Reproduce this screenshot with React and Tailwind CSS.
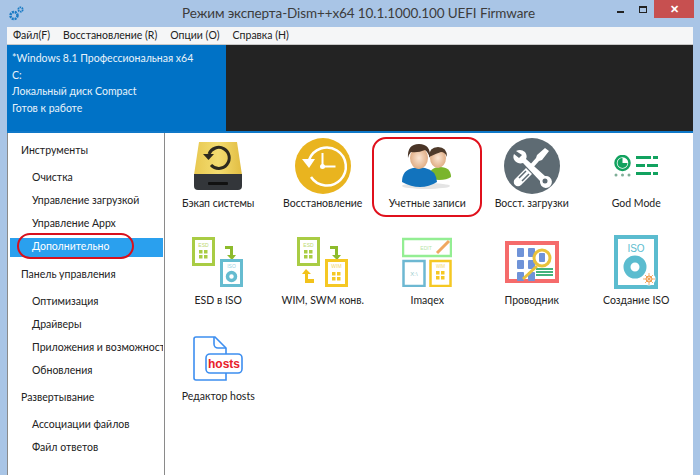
const FONT = "font-['Lato','Roboto',sans-serif]";

const SIDEBAR = [
  { label: "Инструменты", heading: true },
  { label: "Очистка" },
  { label: "Управление загрузкой" },
  { label: "Управление Appx" },
  { label: "Дополнительно", active: true },
  { label: "Панель управления", heading: true },
  { label: "Оптимизация" },
  { label: "Драйверы" },
  { label: "Приложения и возможности" },
  { label: "Обновления" },
  { label: "Развертывание", heading: true },
  { label: "Ассоциации файлов" },
  { label: "Файл ответов" },
];

function BackupIcon() {
  return (
    <svg width="52" height="52" viewBox="0 0 52 52">
      <defs>
        <linearGradient id="dr" x1="0" x2="1" y1="0" y2="0">
          <stop offset="0" stopColor="#e8c850" />
          <stop offset="0.5" stopColor="#f3dc70" />
          <stop offset="1" stopColor="#e2bd42" />
        </linearGradient>
      </defs>
      <path d="M7 2h38l5 33H2z" fill="url(#dr)" />
      <path d="M2 34h48v12q0 4-4 4H6q-4 0-4-4z" fill="#33363a" />
      <rect x="16" y="42" width="20" height="3" rx="1" fill="#111" />
      <path d="M17 14a10.500 10.500 0 1 1 2 11" fill="none" stroke="#2d2a1e" strokeWidth="3" />
      <path d="M11 14h11l-5.500 6z" fill="#2d2a1e" />
    </svg>
  );
}

function RestoreIcon() {
  return (
    <svg width="56" height="56" viewBox="0 0 56 56">
      <circle cx="28" cy="28" r="28" fill="#e9b41f" />
      <path d="M14 22a19 19 0 1 1 2 17" fill="none" stroke="#fff" strokeWidth="2.500" />
      <path d="M7 21h13l-6 9z" fill="#fff" />
      <path d="M27.500 15v13.500h13" fill="none" stroke="#fff" strokeWidth="2" />
      <circle cx="27.500" cy="28.500" r="2.500" fill="#fff" />
    </svg>
  );
}

function UsersIcon() {
  return (
    <svg width="50" height="46" viewBox="0 0 50 46">
      <defs>
        <radialGradient id="face">
          <stop offset="0" stopColor="#fbe6d4" />
          <stop offset="1" stopColor="#e0ae86" />
        </radialGradient>
      </defs>
      <ellipse cx="24" cy="43" rx="24" ry="3" fill="#e4e4e4" />
      <path d="M26 36q1-12 12-12t11 10q-4 3-12 3z" fill="#7ab52c" />
      <ellipse cx="36" cy="15" rx="8" ry="10" fill="url(#face)" />
      <path d="M27 14q0-10 9-10t9 10q-2-5-6-5-6 2-12 5z" fill="#4e3a2a" />
      <path d="M0 39q0-12 11-14l6-1 6 1q11 2 12 14-8 5-17 5T0 39z" fill="#1273bd" />
      <ellipse cx="17" cy="15" rx="9" ry="11" fill="url(#face)" />
      <path d="M6 15Q5 1 17 1t11 14q-2-6-5-8-7 3-14 2-2 2-3 6z" fill="#4a3527" />
    </svg>
  );
}

function BootIcon() {
  return (
    <svg width="56" height="56" viewBox="0 0 56 56">
      <circle cx="28" cy="28" r="28" fill="#5e6b73" />
      <path d="M41 10l4 3-7 9-3 1-8 9-3-3 8-9 1-3z" fill="#fff" />
      <path d="M12 13a8 8 0 0 1 9 1c2 3 2 5 1 7l19 17a6 6 0 1 1-5 5L19 25c-3 1-6 0-8-2s-2-5-1-7l5 4 3-3z" fill="#fff" />
      <path d="M22 30L11 41a4 4 0 0 0 6 6l11-11z" fill="#fff" />
      <path d="M15 40l7-7M18 43l7-7" stroke="#5e6b73" strokeWidth="1.500" />
      <circle cx="41" cy="43" r="2.500" fill="#5e6b73" />
    </svg>
  );
}

function GodModeIcon() {
  return (
    <svg width="44" height="22" viewBox="0 0 44 22">
      <circle cx="8.500" cy="8" r="7" fill="none" stroke="#12a25f" strokeWidth="2.500" />
      <path d="M8.500 8V3a5 5 0 1 0 5 5z" fill="#12a25f" />
      <circle cx="2" cy="20" r="1.500" fill="#7fae98" />
      <circle cx="8.500" cy="20" r="1.500" fill="#7fae98" />
      <circle cx="15" cy="20" r="1.500" fill="#7fae98" />
      <path d="M22 1h15v3H22zM39 1h5v3h-5zM22 9h9v3h-9zM33 9h11v3H33zM22 17h15v3H22zM39 17h5v3h-5z" fill="#12a25f" />
    </svg>
  );
}

function Tiles({ x, y, color }) {
  return (
    <path
      d={`M${x} ${y}h3.500v3.500h-3.500zM${x + 5} ${y}h3.500v3.500h-3.500zM${x} ${y + 5}h3.500v3.500h-3.500zM${x + 5} ${y + 5}h3.500v3.500h-3.500z`}
      fill={color}
    />
  );
}

function EsdIcon() {
  return (
    <svg width="52" height="50" viewBox="0 0 52 50">
      <rect x="1.500" y="1.500" width="20" height="26" fill="#fff" stroke="#a9cc44" strokeWidth="3" />
      <text x="11.500" y="10" fontSize="5" textAnchor="middle" fill="#bcd86f" fontFamily="Liberation Sans">ESD</text>
      <Tiles x={7} y={13} color="#a9cc44" />
      <path d="M33 9h8v9h3l-4 5-5-5h3v-6h-5z" fill="#8dbb2c" />
      <rect x="29.500" y="23.500" width="20" height="25" fill="#fff" stroke="#66bcd0" strokeWidth="3" />
      <text x="39.500" y="31" fontSize="5" textAnchor="middle" fill="#99d2df" fontFamily="Liberation Sans">ISO</text>
      <circle cx="39.500" cy="39.500" r="4" fill="none" stroke="#66bcd0" strokeWidth="3.500" />
    </svg>
  );
}

function WimIcon() {
  return (
    <svg width="52" height="50" viewBox="0 0 52 50">
      <rect x="1.500" y="1.500" width="20" height="26" fill="#fff" stroke="#a9cc44" strokeWidth="3" />
      <text x="11.500" y="10" fontSize="5" textAnchor="middle" fill="#bcd86f" fontFamily="Liberation Sans">ESD</text>
      <Tiles x={7} y={13} color="#a9cc44" />
      <path d="M33 9h8v9h3l-4 5-5-5h3v-6h-5z" fill="#8dbb2c" />
      <path d="M9 32l5 5h-3v5h6v4H8v-9H5z" fill="#f2c21b" />
      <rect x="29.500" y="23.500" width="20" height="25" fill="#fff" stroke="#f5c823" strokeWidth="3" />
      <text x="39.500" y="31" fontSize="5" textAnchor="middle" fill="#f3d667" fontFamily="Liberation Sans">WIM</text>
      <Tiles x={35} y={35} color="#f5c823" />
    </svg>
  );
}

function ImagexIcon() {
  return (
    <svg width="50" height="50" viewBox="0 0 50 50">
      <rect x="1" y="2" width="48" height="17" fill="#fff" stroke="#93ee93" strokeWidth="2.500" />
      <text x="24" y="13" fontSize="5" textAnchor="middle" fill="#b6e6a8" fontFamily="Liberation Sans">EDIT</text>
      <path d="M35 16L47 4" stroke="#f0a860" strokeWidth="3" />
      <rect x="1.500" y="24" width="21" height="25" fill="#fff" stroke="#6db8d2" strokeWidth="2.500" />
      <text x="12" y="39" fontSize="6" textAnchor="middle" fill="#9cc" fontFamily="Liberation Sans">X:\</text>
      <rect x="28.500" y="24" width="20" height="25" fill="#fff" stroke="#f5c823" strokeWidth="2.500" />
      <text x="38.500" y="31" fontSize="4.500" textAnchor="middle" fill="#f3d667" fontFamily="Liberation Sans">WIM</text>
      <Tiles x={34} y={34} color="#f5c823" />
    </svg>
  );
}

function ExplorerIcon() {
  const cells = [
    [12, 9], [23, 9], [12, 21], [23, 21], [12, 33], [23, 33],
  ];
  return (
    <svg width="54" height="42" viewBox="0 0 54 42">
      <rect x="2" y="2" width="50" height="38" fill="#fff" stroke="#f56b6b" strokeWidth="4" />
      {cells.map(([x, y]) => (
        <rect key={`${x}-${y}`} x={x} y={y - 2} width="7" height="9" rx="1" fill="#6f93d8" />
      ))}
      <path d="M31 28h17M31 31h17M31 34h17" stroke="#44b27c" strokeWidth="2" />
      <path d="M18 38l14-13" stroke="#e9c23a" strokeWidth="3" />
      <circle cx="37" cy="17" r="8" fill="#fff" stroke="#e9c23a" strokeWidth="3" />
      <rect x="34" y="12" width="6" height="9" rx="1" fill="#6f93d8" />
    </svg>
  );
}

function CreateIsoIcon() {
  return (
    <svg width="44" height="54" viewBox="0 0 44 54">
      <rect x="2" y="2" width="40" height="50" fill="#fff" stroke="#5bbccf" strokeWidth="4" />
      <text x="22" y="17" fontSize="10" textAnchor="middle" fill="#5bbccf" fontFamily="Liberation Sans">ISO</text>
      <circle cx="21" cy="32" r="8" fill="none" stroke="#5bbccf" strokeWidth="7" />
      <circle cx="35" cy="44" r="6.500" fill="#fff" />
      <circle cx="35" cy="44" r="3" fill="none" stroke="#ef9a4a" />
      <path d="M35 38v12M29 44h12M31 40l8 8M39 40l-8 8" stroke="#ef9a4a" strokeWidth="0.800" />
    </svg>
  );
}

function HostsIcon() {
  return (
    <svg width="50" height="46" viewBox="0 0 50 46">
      <path d="M3 1h19l11 11v32H3a2 2 0 0 1-2-2V3a2 2 0 0 1 2-2z" fill="#fff" stroke="#3d8ef0" strokeWidth="1.600" />
      <path d="M21 1v7a4 4 0 0 0 4 4h8" fill="none" stroke="#3d8ef0" strokeWidth="1.600" />
      <rect x="13" y="18" width="36" height="19" rx="4" fill="#fff" stroke="#3d8ef0" strokeWidth="1.600" />
      <text x="31" y="32" fontSize="12" fontWeight="700" textAnchor="middle" fill="#e8202a" fontFamily="Liberation Sans">hosts</text>
    </svg>
  );
}

const TOOLS = [
  { label: "Бэкап системы", Icon: BackupIcon },
  { label: "Восстановление", Icon: RestoreIcon },
  { label: "Учетные записи", Icon: UsersIcon },
  { label: "Восст. загрузки", Icon: BootIcon },
  { label: "God Mode", Icon: GodModeIcon },
  { label: "ESD в ISO", Icon: EsdIcon },
  { label: "WIM, SWM конв.", Icon: WimIcon },
  { label: "Imaqex", Icon: ImagexIcon },
  { label: "Проводник", Icon: ExplorerIcon },
  { label: "Создание ISO", Icon: CreateIsoIcon },
  { label: "Редактор hosts", Icon: HostsIcon },
];

export default function App() {
  return (
    <div className={`relative w-[700px] h-[475px] overflow-hidden flex flex-col bg-[#a9c5e6] text-[10.5px] text-[#222] ${FONT}`}>
      {/* Title bar */}
      <header className="h-[27px] shrink-0 flex items-center pl-[9px]">
        <svg width="15" height="15" viewBox="0 0 15 15" className="mb-[1px]">
          <circle cx="5" cy="9.500" r="3.500" fill="none" stroke="#1a7bc4" strokeWidth="2.500" strokeDasharray="2 0.800" />
          <circle cx="11.500" cy="3.500" r="2.200" fill="none" stroke="#1a7bc4" strokeWidth="1.800" strokeDasharray="1.500 0.600" />
        </svg>
        <div className="flex-1 text-center text-[13.5px] tracking-[-0.1px] text-[#3c3c3c] pl-[76px] whitespace-nowrap">
          Режим эксперта-Dism++x64 10.1.1000.100 UEFI Firmware
        </div>
        <div className="flex items-start self-start">
          <div className="w-[7px] mt-[11px] h-[2px] bg-[#222]" />
          <div className="w-[8px] h-[7px] ml-[15px] mt-[6px] border border-[#222] border-t-2" />
          <div className="ml-[7px] mr-[6px] w-[40px] h-[18px] bg-[#c75050] flex items-center justify-center text-white text-[11px] font-bold">
            ✕
          </div>
        </div>
      </header>

      <div className="flex-1 min-h-0 mx-[7px] flex flex-col bg-white">
        {/* Menu */}
        <nav className="h-[17px] shrink-0 bg-[#f5f6f7] flex items-center pl-[6px] gap-[13px] border-b border-[#c8c8c8] box-content">
          <span>Файл(F)</span>
          <span>Восстановление (R)</span>
          <span>Опции (O)</span>
          <span>Справка (H)</span>
        </nav>

        {/* Status banner */}
        <div className="h-[86px] shrink-0 flex bg-[#232323] border-b-2 border-[#0f78c8] box-content">
          <div className="w-[219px] bg-[#0072c6] text-[#e8f2fa] pl-[5px] pt-[5px] leading-[16.6px]">
            <div>*Windows 8.1 Профессиональная x64</div>
            <div>C:</div>
            <div>Локальный диск Compact</div>
            <div>Готов к работе</div>
          </div>
        </div>

        <div className="flex-1 min-h-0 flex">
          {/* Sidebar */}
          <aside className="w-[158px] shrink-0 flex flex-col border-x border-[#8a8a8a] pt-[2px] pl-[2px] overflow-hidden">
            {SIDEBAR.map((item) =>
              item.heading ? (
                <div key={item.label} className="shrink-0 h-[23px] mt-[4.5px] mb-[4px] pl-[11px] flex items-center">
                  {item.label}
                </div>
              ) : (
                <div
                  key={item.label}
                  className={`shrink-0 pl-[22px] mr-[1px] flex items-center whitespace-nowrap overflow-hidden ${
                    item.active ? "bg-[#2aa0ee] text-white h-[19px] my-[2px]" : "h-[23px]"
                  }`}
                >
                  {item.label}
                </div>
              )
            )}
          </aside>

          {/* Tools */}
          <main className="flex-1 grid grid-cols-[repeat(5,104.5px)] auto-rows-[96.5px] pt-[2px] pl-[1px]">
            {TOOLS.map(({ label, Icon }) => (
              <div key={label} className="flex flex-col items-center">
                <div className="h-[61px] flex items-center justify-center">
                  <Icon />
                </div>
                <div className="text-[#222] whitespace-nowrap">{label}</div>
              </div>
            ))}
          </main>
        </div>
      </div>

      {/* Red hand-drawn marks over the screenshot */}
      <div className="absolute left-[372px] top-[137px] w-[110px] h-[80px] rounded-[14px] border-2 border-[#e0101c]" />
      <div className="absolute left-[17px] top-[233px] w-[117px] h-[26px] rounded-[13px] border-2 border-[#d8101c]" />
    </div>
  );
}
